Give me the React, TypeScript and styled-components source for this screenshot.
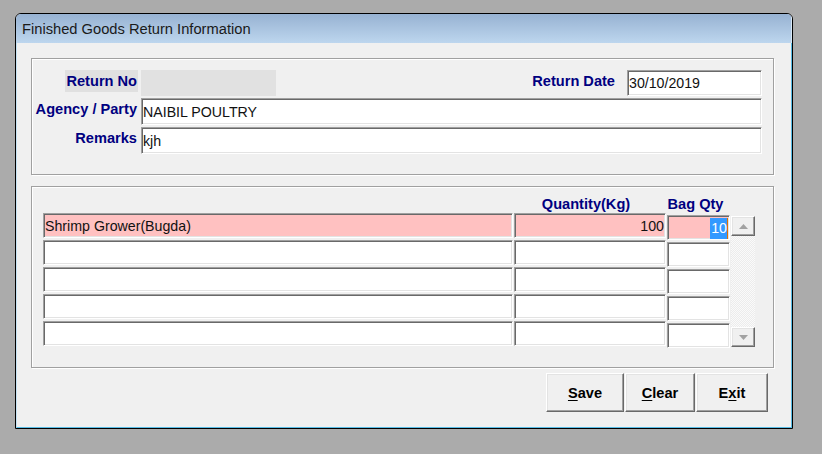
import React from "react";
import styled, { createGlobalStyle } from "styled-components";

const Global = createGlobalStyle`
  html, body { margin: 0; padding: 0; background: #ababab; }
  body { font-family: "Liberation Sans", Arial, sans-serif; }
  * { box-sizing: border-box; }
`;

const Desktop = styled.div`
  width: 822px;
  height: 454px;
  padding: 13px 0 0 15px;
  background: #ababab;
`;

const Window = styled.div`
  width: 778px;
  height: 416px;
  border: 1px solid #000;
  border-radius: 6px 6px 0 0;
  overflow: hidden;
  display: flex;
  flex-direction: column;
  background: #f0f0f0;
`;

const TitleBar = styled.div`
  height: 29px;
  flex: none;
  display: flex;
  align-items: center;
  padding-left: 6px;
  background: linear-gradient(#97b2d2, #bdd6ee);
  border-right: 1px solid #d8e8f6;
  font-size: 14.7px;
  color: #1a1a1a;
`;

const Client = styled.div`
  flex: 1;
  display: flex;
  flex-direction: column;
  border-left: 1px solid #c4e2f4;
  border-right: 1px solid #58bde6;
  border-bottom: 1px solid #58bde6;
  padding: 15px 0 0 14px;
  gap: 11px;
`;

const GroupBox = styled.div<{ $h: number }>`
  width: 743px;
  height: ${(p) => p.$h}px;
  border: 1px solid #a0a0a0;
  box-shadow: inset 1px 1px 0 #fff, 1px 1px 0 #fff;
`;

const FormGrid = styled.div`
  display: grid;
  grid-template-columns: 106px 1fr;
  column-gap: 3px;
  row-gap: 2px;
  padding: 11px 11px 0 0;
`;

const Label = styled.div<{ $shaded?: boolean }>`
  justify-self: end;
  align-self: start;
  height: 22px;
  line-height: 22px;
  padding: 0 1px;
  font-size: 14.6px;
  font-weight: bold;
  color: #000080;
  white-space: nowrap;
  background: ${(p) => (p.$shaded ? "#e0e0e0" : "transparent")};
`;

const FirstRow = styled.div`
  display: flex;
  align-items: flex-start;
`;

const ReadOnlyBox = styled.div`
  width: 135px;
  height: 26px;
  background: #e1e1e1;
`;

const Spacer = styled.div`
  flex: 1;
`;

const DateLabel = styled(Label)`
  margin-right: 11px;
`;

const Field = styled.div<{ $w?: number; $h: number }>`
  width: ${(p) => (p.$w ? `${p.$w}px` : "100%")};
  height: ${(p) => p.$h}px;
  display: flex;
  align-items: center;
  background: #fff;
  border: 1px solid;
  border-color: #a0a0a0 #fff #fff #a0a0a0;
  box-shadow: inset 1px 1px 0 #696969, inset -1px -1px 0 #e3e3e3;
  padding-left: 1px;
  font-size: 14.2px;
  color: #111;
  white-space: nowrap;
`;

const GridWrap = styled.div`
  padding: 9px 0 0 11px;
`;

const Cols = styled.div`
  display: grid;
  grid-template-columns: 470px 152px 63px 24px;
  column-gap: 1px;
  align-items: start;
`;

const HeadCell = styled.div<{ $shift?: number }>`
  height: 17px;
  line-height: 17px;
  text-align: center;
  font-size: 14.6px;
  font-weight: bold;
  color: #000080;
  white-space: nowrap;
  transform: translateX(${(p) => p.$shift ?? 0}px);
`;

const Column = styled.div<{ $offset?: number }>`
  display: flex;
  flex-direction: column;
  gap: 2px;
  padding-top: ${(p) => p.$offset ?? 0}px;
`;

const Cell = styled.div<{ $active?: boolean; $right?: boolean }>`
  height: 25px;
  display: flex;
  align-items: center;
  justify-content: ${(p) => (p.$right ? "flex-end" : "flex-start")};
  background: ${(p) => (p.$active ? "#ffc1c1" : "#fff")};
  border: 1px solid;
  border-color: #a0a0a0 #fff #fff #a0a0a0;
  box-shadow: inset 1px 1px 0 #696969, inset -1px -1px 0 #e3e3e3;
  padding: 1px 1px 0 1px;
  font-size: 14.2px;
  color: #111;
  white-space: nowrap;
  overflow: hidden;
`;

const Selection = styled.span`
  background: #3399ff;
  color: #fff;
  height: 21px;
  line-height: 21px;
  padding-left: 1px;
  border-right: 1px solid #e07000;
`;

const ScrollBar = styled.div`
  margin-top: 3px;
  height: 131px;
  display: flex;
  flex-direction: column;
  background: repeating-conic-gradient(#fafafa 0 25%, #ececec 0 50%) 0 0 / 2px 2px;
`;

const ScrollTrack = styled.div`
  flex: 1;
`;

const ScrollButton = styled.div`
  height: 20px;
  display: flex;
  align-items: center;
  justify-content: center;
  background: #f0f0f0;
  border: 1px solid;
  border-color: #fff #696969 #696969 #fff;
  box-shadow: inset -1px -1px 0 #a0a0a0, inset 1px 1px 0 #e3e3e3;
`;

const ButtonRow = styled.div`
  display: flex;
  justify-content: flex-end;
  gap: 1px;
  margin-top: -6px;
  padding-right: 23px;
`;

const Button = styled.button<{ $w: number }>`
  width: ${(p) => p.$w}px;
  height: 39px;
  margin: 0;
  padding: 0;
  background: #f0f0f0;
  border: 1px solid;
  border-color: #fff #696969 #696969 #fff;
  box-shadow: inset -1px -1px 0 #a0a0a0, inset 1px 1px 0 #e3e3e3;
  font-family: "Liberation Sans", Arial, sans-serif;
  font-size: 14.6px;
  font-weight: bold;
  color: #000;
  u { text-decoration-thickness: 1px; text-underline-offset: 2px; }
`;

const Arrow = ({ down }: { down?: boolean }) => (
  <svg width="9" height="5" viewBox="0 0 9 5">
    <path d={down ? "M0 0h9L4.5 5z" : "M0 5h9L4.5 0z"} fill="#a2a2a2" />
  </svg>
);

const rows = [0, 1, 2, 3, 4];

export default function App() {
  return (
    <>
      <Global />
      <Desktop>
        <Window>
          <TitleBar>Finished Goods Return Information</TitleBar>
          <Client>
            <GroupBox $h={117}>
              <FormGrid>
                <Label $shaded>Return No</Label>
                <FirstRow>
                  <ReadOnlyBox />
                  <Spacer />
                  <DateLabel>Return Date</DateLabel>
                  <Field $w={135} $h={26}>30/10/2019</Field>
                </FirstRow>
                <Label>Agency / Party</Label>
                <Field $h={27}>NAIBIL POULTRY</Field>
                <Label>Remarks</Label>
                <Field $h={27}>kjh</Field>
              </FormGrid>
            </GroupBox>
            <GroupBox $h={182}>
              <GridWrap>
                <Cols>
                  <div />
                  <HeadCell $shift={-4}>Quantity(Kg)</HeadCell>
                  <HeadCell $shift={-3}>Bag Qty</HeadCell>
                  <div />
                </Cols>
                <Cols>
                  <Column>
                    {rows.map((i) => (
                      <Cell key={i} $active={i === 0}>
                        {i === 0 ? "Shrimp Grower(Bugda)" : ""}
                      </Cell>
                    ))}
                  </Column>
                  <Column>
                    {rows.map((i) => (
                      <Cell key={i} $active={i === 0} $right>
                        {i === 0 ? "100" : ""}
                      </Cell>
                    ))}
                  </Column>
                  <Column $offset={2}>
                    {rows.map((i) => (
                      <Cell key={i} $active={i === 0} $right>
                        {i === 0 ? <Selection>10</Selection> : ""}
                      </Cell>
                    ))}
                  </Column>
                  <ScrollBar>
                    <ScrollButton>
                      <Arrow />
                    </ScrollButton>
                    <ScrollTrack />
                    <ScrollButton>
                      <Arrow down />
                    </ScrollButton>
                  </ScrollBar>
                </Cols>
              </GridWrap>
            </GroupBox>
            <ButtonRow>
              <Button $w={78}>
                <u>S</u>ave
              </Button>
              <Button $w={70}>
                <u>C</u>lear
              </Button>
              <Button $w={72}>
                E<u>x</u>it
              </Button>
            </ButtonRow>
          </Client>
        </Window>
      </Desktop>
    </>
  );
}
